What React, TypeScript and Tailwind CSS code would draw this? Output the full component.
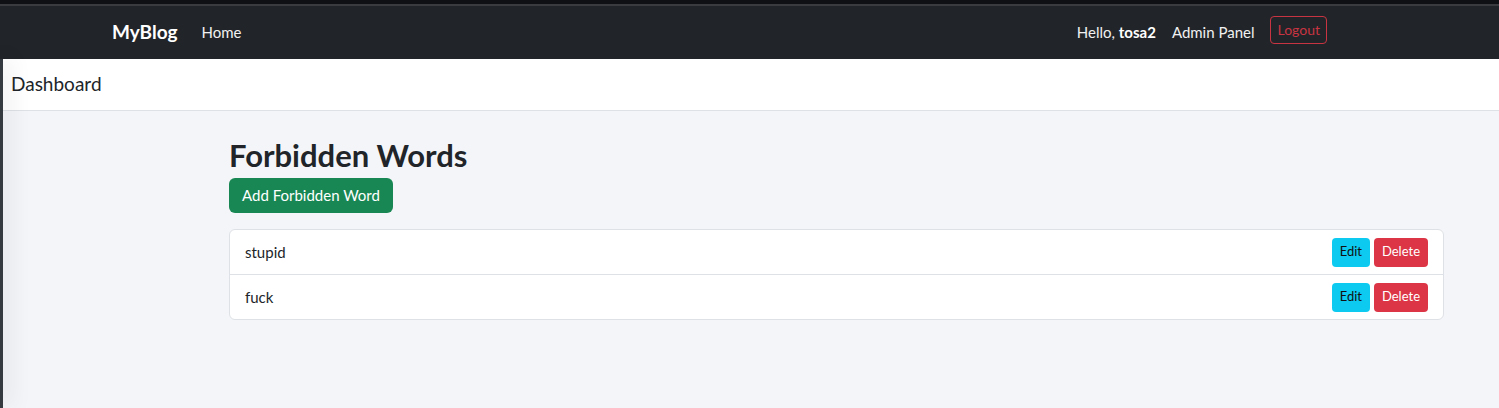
import React from 'react';

const words = ['stupid', 'fuck'];

export default function App() {
  return (
    <div className="min-h-screen bg-[#f4f5f8] font-['Lato','Liberation_Sans',sans-serif] text-[#212529]">
      {/* top strip */}
      <div className="h-[4px] bg-[#0f1013]" />
      <div className="h-[2px] bg-[#3a3b3f]" />

      {/* Navbar */}
      <nav className="h-[53px] bg-[#212529] flex items-center justify-between pl-[112px] pr-[172px]">
        <div className="flex items-center gap-[24px]">
          <span className="text-white font-bold text-[19px]">MyBlog</span>
          <span className="text-[#f1f1f1] text-[15px]">Home</span>
        </div>
        <div className="flex items-center gap-[16px] text-[15px] text-[#f1f1f1]">
          <span>
            Hello, <b className="text-white">tosa2</b>
          </span>
          <span>Admin Panel</span>
          <button className="mb-[6px] h-[28px] px-[6px] rounded-[4px] border border-[#c93442] text-[#c93442] text-[14px]">
            Logout
          </button>
        </div>
      </nav>

      <div className="flex min-h-[349px]">
        {/* collapsed sidebar */}
        <div className="relative z-10 w-[3px] bg-[#343a40] shadow-[3px_0_22px_rgba(0,0,0,0.3)]" />

        <div className="flex-1">
          {/* Header */}
          <div className="h-[52px] bg-white border-b border-[#dee2e6] flex items-center pl-[8px]">
            <span className="text-[19px]">Dashboard</span>
          </div>

          {/* Content */}
          <div className="pl-[226px] pr-[55px] pt-[25px]">
            <h2 className="text-[31px] font-bold leading-[38px] text-[#212529]">Forbidden Words</h2>
            <button className="mt-[4px] h-[35px] px-[13px] rounded-[6px] bg-[#198754] text-white text-[15px]">
              Add Forbidden Word
            </button>

            <div className="mt-[16px] bg-white border border-[#dee2e6] rounded-[6px]">
              {words.map((w, i) => (
                <div
                  key={w}
                  className={`flex items-center justify-between pl-[15px] pr-[15px] ${
                    i > 0 ? 'h-[45px] border-t border-[#dee2e6]' : 'h-[44px]'
                  }`}
                >
                  <span className="text-[15px]">{w}</span>
                  <div className="flex items-center gap-[4px]">
                    <button className="h-[29px] px-[8px] rounded-[4px] bg-[#0dcaf0] text-[#111] text-[13px]">
                      Edit
                    </button>
                    <button className="h-[29px] px-[8px] rounded-[4px] bg-[#dc3545] text-white text-[13px]">
                      Delete
                    </button>
                  </div>
                </div>
              ))}
            </div>
          </div>
        </div>
      </div>
    </div>
  );
}
